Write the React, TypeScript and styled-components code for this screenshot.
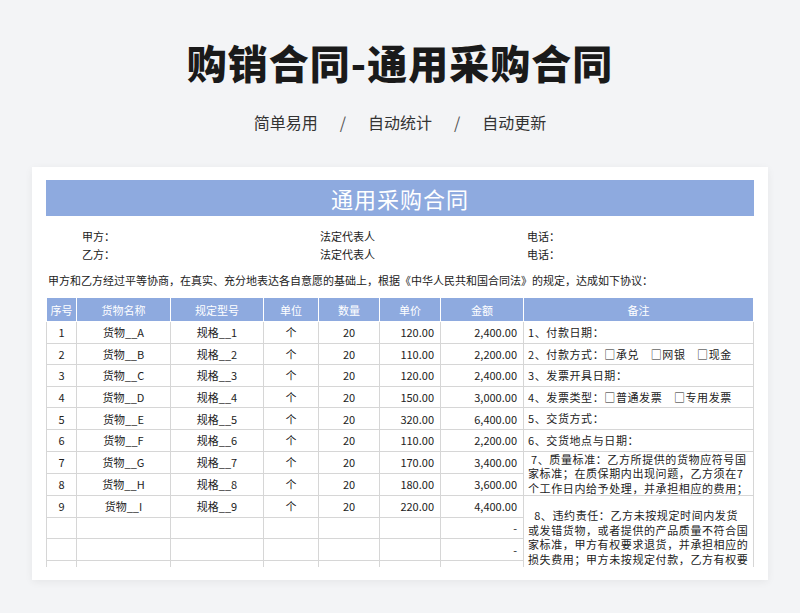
import React from "react";
import styled, { createGlobalStyle } from "styled-components";

const G = createGlobalStyle`
  body { margin: 0; background: #f3f4f6; font-family: "Noto Sans CJK SC", "Noto Sans", sans-serif; }
`;
const Page = styled.div`width: 800px; height: 613px; overflow: hidden; display: flex; flex-direction: column; align-items: center;`;
const H1 = styled.h1`margin: 36px 0 0; font-size: 40px; line-height: 52px; font-weight: 900; color: #1a1a1a; letter-spacing: 1px;`;
const Sub = styled.div`margin-top: 22px; display: flex; gap: 20px; font-size: 16px; color: #333; line-height: 24px;`;
const Slash = styled.span`color: #555; margin: 0 2px;`;
const Card = styled.div`margin-top: 33px; width: 736px; background: #fff; padding: 13px 14px 13px 14px; box-sizing: border-box; box-shadow: 0 2px 8px rgba(0,0,0,0.06);`;
const Clip = styled.div`height: 387px; overflow: hidden; font-size: 11px; color: #222;`;
const TitleBar = styled.div`height: 36px; background: #8eaadf; color: #fff; font-size: 22px; display: flex; align-items: center; justify-content: center; letter-spacing: 1px;`;
const InfoGrid = styled.div`display: grid; grid-template-columns: 238px 207px 1fr; padding: 12px 0 0 36px; row-gap: 2px; line-height: 16px;`;
const Para = styled.div`margin-top: 10px; padding-left: 2px; line-height: 16px;`;
const Table = styled.table`margin-top: 9px; width: 707px; border-collapse: collapse; table-layout: fixed;`;
const Th = styled.th`background: #8eaadf; color: #fff; font-weight: 400; height: 23px; border: 1px solid #fff; font-size: 11px; padding: 0;`;
const Td = styled.td<{ $a?: string }>`height: 20.6px; border: 1px solid #d6d6d6; padding: 0 6px; text-align: ${p => p.$a || "center"}; line-height: 14px; white-space: nowrap;`;
const Note = styled.td`border: 1px solid #d6d6d6; padding: 0 4px; line-height: 14.5px; font-size: 11px; letter-spacing: 0.6px; vertical-align: middle; overflow: hidden;`;
const NoteTop = styled(Note)`vertical-align: top; padding-top: 12px;`;

const rows = [
  ["120.00", "2,400.00"], ["110.00", "2,200.00"], ["120.00", "2,400.00"], ["150.00", "3,000.00"],
  ["320.00", "6,400.00"], ["110.00", "2,200.00"], ["170.00", "3,400.00"], ["180.00", "3,600.00"], ["220.00", "4,400.00"],
];
const notes = ["1、付款日期：", "2、付款方式：□承兑　□网银　□现金", "3、发票开具日期：", "4、发票类型：□普通发票　□专用发票", "5、交货方式：", "6、交货地点与日期："];
const L = "ABCDEFGHI";

export default function App() {
  return (
    <Page>
      <G />
      <H1>购销合同-通用采购合同</H1>
      <Sub><span>简单易用</span><Slash>/</Slash><span>自动统计</span><Slash>/</Slash><span>自动更新</span></Sub>
      <Card>
        <Clip>
          <TitleBar>通用采购合同</TitleBar>
          <InfoGrid>
            <span>甲方：</span><span>法定代表人</span><span>电话：</span>
            <span>乙方：</span><span>法定代表人</span><span>电话：</span>
          </InfoGrid>
          <Para>甲方和乙方经过平等协商，在真实、充分地表达各自意愿的基础上，根据《中华人民共和国合同法》的规定，达成如下协议：</Para>
          <Table>
            <colgroup>
              <col style={{ width: 30 }} /><col style={{ width: 94 }} /><col style={{ width: 93 }} /><col style={{ width: 55 }} />
              <col style={{ width: 61 }} /><col style={{ width: 61 }} /><col style={{ width: 83 }} /><col style={{ width: 230 }} />
            </colgroup>
            <thead>
              <tr>{["序号", "货物名称", "规定型号", "单位", "数量", "单价", "金额", "备注"].map(h => <Th key={h}>{h}</Th>)}</tr>
            </thead>
            <tbody>
              {rows.map((r, i) => (
                <tr key={i}>
                  <Td>{i + 1}</Td><Td>货物__{L[i]}</Td><Td>规格__{i + 1}</Td><Td>个</Td><Td>20</Td>
                  <Td $a="right">{r[0]}</Td><Td $a="right">{r[1]}</Td>
                  {i < 6 && <Note>{notes[i]}</Note>}
                  {i === 6 && <Note rowSpan={2}>&nbsp;7、质量标准：乙方所提供的货物应符号国家标准；在质保期内出现问题，乙方须在7个工作日内给予处理，并承担相应的费用；</Note>}
                  {i === 8 && <NoteTop rowSpan={5}>&nbsp;&nbsp;8、违约责任：乙方未按规定时间内发货或发错货物，或者提供的产品质量不符合国家标准，甲方有权要求退货，并承担相应的损失费用；甲方未按规定付款，乙方有权要求按每日总货款5%支付滞纳金。</NoteTop>}
                </tr>
              ))}
              {[0, 1, 2, 3].map(k => (
                <tr key={"e" + k}>
                  <Td /><Td /><Td /><Td /><Td /><Td /><Td $a="right">-</Td>
                </tr>
              ))}
            </tbody>
          </Table>
        </Clip>
      </Card>
    </Page>
  );
}
